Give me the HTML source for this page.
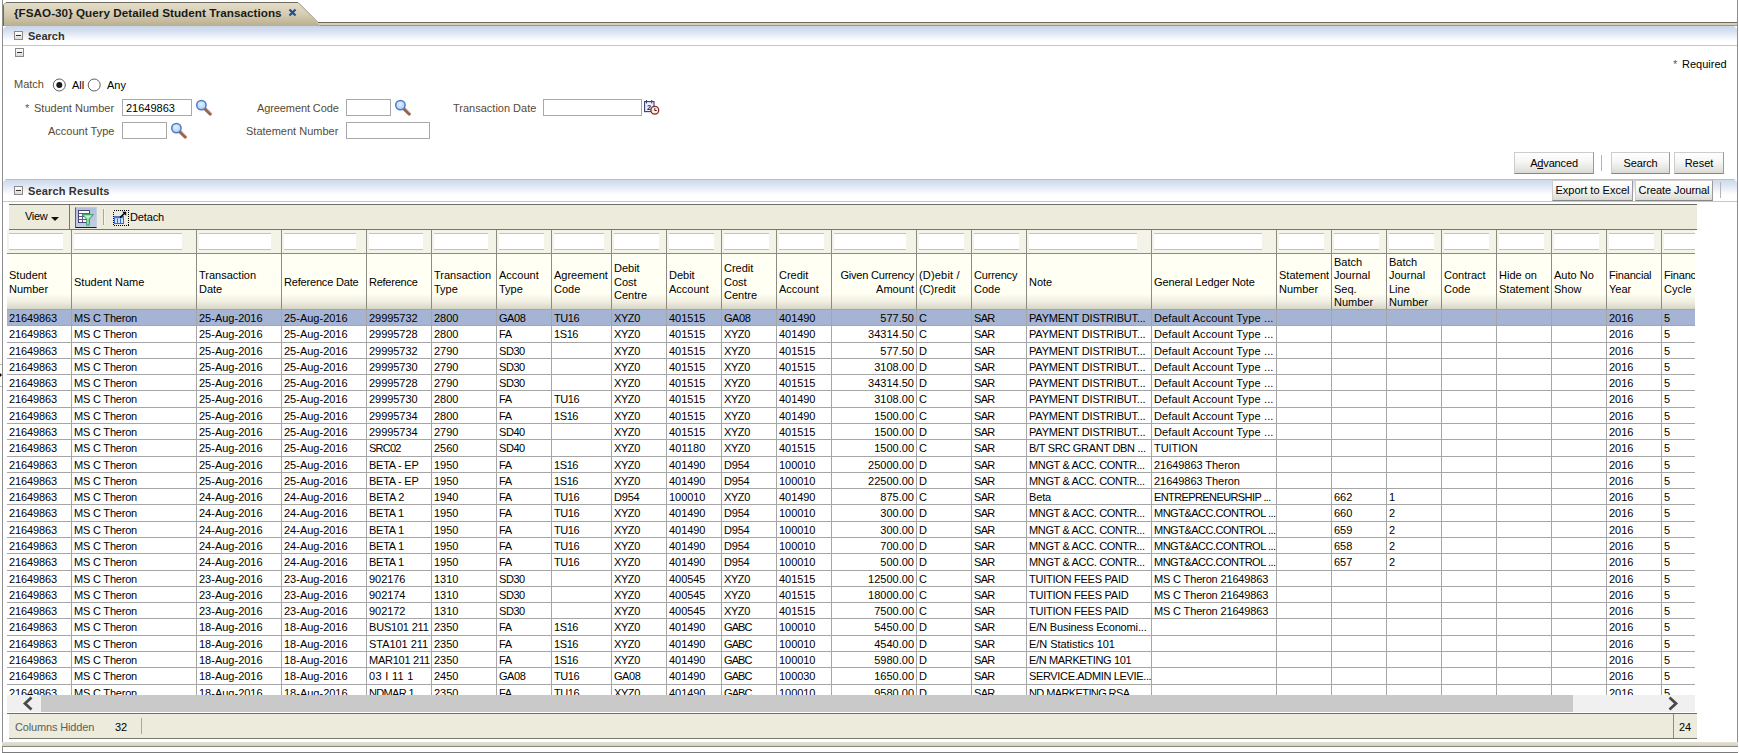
<!DOCTYPE html>
<html><head><meta charset="utf-8"><title>{FSAO-30} Query Detailed Student Transactions</title>
<style>
html,body{margin:0;padding:0;background:#fff;}
body{width:1739px;height:753px;overflow:hidden;position:relative;font-family:"Liberation Sans",sans-serif;font-size:11px;color:#000;}
.a{position:absolute;}
.t{position:absolute;white-space:nowrap;line-height:13px;margin-top:1px;}
.lbl{color:#5a4a33;}
.inp{position:absolute;background:#fff;border:1px solid #a9a9a9;box-sizing:border-box;}
.btn{position:absolute;box-sizing:border-box;border:1px solid #cdcdcd;border-bottom-color:#868686;border-right-color:#9a9a9a;background:linear-gradient(#ffffff 0%,#f6f6f4 45%,#dadad5 100%);text-align:center;line-height:20px;color:#000;white-space:nowrap;}
#grid{position:absolute;left:7px;top:229px;width:1688px;height:466px;overflow:hidden;background:#fff;}
.fc{position:absolute;top:1px;height:23px;background:#f4f3e8;border-right:1px solid #8c8c84;box-sizing:border-box;}
.fi{position:absolute;left:2px;top:3px;height:17px;background:#fff;border-top:1px solid #c4c3b8;border-bottom:1px solid #c4c3b8;box-sizing:border-box;}
.hc{position:absolute;top:25px;height:55px;border-right:1px solid #8c8c84;box-sizing:border-box;background:linear-gradient(#fffff3 0%,#fffff3 72%,#efeee0 87%,#d6d5c5 100%);display:flex;align-items:center;line-height:13.5px;padding:2px 0 0 2px;white-space:nowrap;overflow:hidden;}
.hc.r{justify-content:flex-end;text-align:right;padding:2px 2px 0 0;}
.row{position:absolute;left:0;width:1710px;border-top:1px solid #a6a6a6;box-sizing:border-box;}
.row.sel{background:#a6b4d3;}
.c{position:absolute;top:0;bottom:0;border-right:1px solid #a6a6a6;box-sizing:border-box;padding:0 0 0 2px;white-space:nowrap;overflow:hidden;line-height:16px;letter-spacing:-0.2px;}
.c.r{text-align:right;padding:0 2px 0 0;}
.l-18{letter-spacing:-0.90px}.l-15{letter-spacing:-0.75px}.l-13{letter-spacing:-0.65px}.l-12{letter-spacing:-0.60px}.l-10{letter-spacing:-0.50px}.l-9{letter-spacing:-0.45px}.l-8{letter-spacing:-0.40px}.l-7{letter-spacing:-0.35px}.l-6{letter-spacing:-0.30px}.l-5{letter-spacing:-0.25px}.l-4{letter-spacing:-0.20px}.l-3{letter-spacing:-0.15px}.l-2{letter-spacing:-0.10px}.l-1{letter-spacing:-0.05px}.l0{letter-spacing:0.00px}.l2{letter-spacing:0.10px}.l3{letter-spacing:0.15px}.l6{letter-spacing:0.30px}</style></head><body>


<!-- tab -->
<svg class="a" style="left:0;top:0" width="1739" height="26">
<defs><linearGradient id="tg" x1="0" y1="0" x2="0" y2="1"><stop offset="0" stop-color="#e4ddc8"/><stop offset="0.5" stop-color="#d4ccb1"/><stop offset="1" stop-color="#b9ae8e"/></linearGradient></defs>
<rect x="3" y="23" width="1734" height="2" fill="#d6d2ba"/>
<rect x="3" y="25" width="1734" height="1" fill="#9e9882"/>
<path d="M3.5 26 L3.5 5 L6 2.5 L298 2.5 L318 22.5 L1737 22.5" fill="none" stroke="#6f6c5e" stroke-width="1"/>
<path d="M4 26 L4 5.2 L6.2 3 L297.8 3 L320.5 26 Z" fill="url(#tg)"/>
<path d="M289.5 9.5 L295.5 15.5 M295.5 9.5 L289.5 15.5" stroke="#1f4f8f" stroke-width="2.2" fill="none"/>
</svg>
<div class="t" style="left:14px;top:5px;font-weight:bold;font-size:11.7px;color:#1a1a1a;letter-spacing:0.03px">{FSAO-30} Query Detailed Student Transactions</div>

<!-- side borders -->
<div class="a" style="left:2px;top:0px;width:1px;height:753px;background:#8e8e8e;"></div>
<div class="a" style="left:1737px;top:0px;width:1px;height:747px;background:#8e8e8e;"></div>

<div class="a" style="left:0;top:364px;width:2px;height:1px;background:#b4b4b4;"></div>
<div class="a" style="left:0;top:386px;width:2px;height:1px;background:#b4b4b4;"></div>
<div class="a" style="left:0;top:373px;width:0;height:0;border-top:2.5px solid transparent;border-bottom:2.5px solid transparent;border-left:2.5px solid #000;"></div>
<!-- Search header -->
<div class="a" style="left:3px;top:26px;width:1734px;height:19px;background:linear-gradient(#c8d5ea 0%,#d7e1f0 28%,#edf2f9 55%,#ffffff 80%);"></div>
<div class="a" style="left:3px;top:45px;width:1734px;height:1px;background:#c6c6c6;"></div>
<div class="a" style="left:14px;top:31px;width:9px;height:9px;box-sizing:border-box;border:1px solid #8a8a8a;background:linear-gradient(#fff,#dcdcd4);"></div>
<div class="a" style="left:16px;top:35px;width:5px;height:1px;background:#333;"></div>
<div class="t" style="left:28px;top:29px;font-weight:bold;color:#333;">Search</div>
<div class="a" style="left:15px;top:48px;width:9px;height:9px;box-sizing:border-box;border:1px solid #8a8a8a;background:linear-gradient(#fff,#dcdcd4);"></div>
<div class="a" style="left:17px;top:52px;width:5px;height:1px;background:#333;"></div>

<div class="t" style="left:1673px;top:57px;color:#3a5a9a">*</div><div class="t" style="left:1682px;top:57px;">Required</div>

<!-- Match -->
<div class="t lbl" style="left:14px;top:77px;">Match</div>
<svg class="a" style="left:50px;top:75px" width="60" height="20" viewBox="0 0 60 20">
<circle cx="9.3" cy="10" r="6" fill="#fff" stroke="#5f5f5f" stroke-width="1"/><circle cx="9.3" cy="10" r="3" fill="#1a1a1a"/>
<circle cx="44.2" cy="10" r="6" fill="#fff" stroke="#5f5f5f" stroke-width="1"/>
</svg>
<div class="t" style="left:72px;top:78px;">All</div>
<div class="t" style="left:107px;top:78px;">Any</div>

<!-- form row 1 -->
<div class="t" style="left:25px;top:101px;color:#3a5a9a">*</div><div class="t lbl" style="left:34px;top:101px;">Student Number</div>
<div class="inp" style="left:122px;top:99px;width:70px;height:17px;"></div>
<div class="t" style="left:126px;top:101px;">21649863</div>
<div class="t lbl" style="left:257px;top:101px;letter-spacing:-0.1px">Agreement Code</div>
<div class="inp" style="left:346px;top:99px;width:45px;height:17px;"></div>
<div class="t lbl" style="left:453px;top:101px;">Transaction Date</div>
<div class="inp" style="left:543px;top:99px;width:99px;height:17px;"></div>
<!-- form row 2 -->
<div class="t lbl" style="left:48px;top:124px;">Account Type</div>
<div class="inp" style="left:122px;top:122px;width:45px;height:17px;"></div>
<div class="t lbl" style="left:246px;top:124px;">Statement Number</div>
<div class="inp" style="left:346px;top:122px;width:84px;height:17px;"></div>

<svg class="a" style="left:195px;top:99px" width="18" height="18" viewBox="0 0 18 18">
<defs><radialGradient id="lg195" cx="0.45" cy="0.4" r="0.6"><stop offset="0" stop-color="#e4f1ff"/><stop offset="1" stop-color="#a9cdfb"/></radialGradient></defs>
<path d="M10.3 10 L15.2 14.9" stroke="#9a6248" stroke-width="3.4" stroke-linecap="round"/>
<path d="M11.6 9.6 L16.2 14.2" stroke="#d9b19b" stroke-width="0.9" stroke-linecap="round"/>
<circle cx="6.4" cy="6.1" r="4.7" fill="url(#lg195)" stroke="#4c7cc6" stroke-width="1.5"/>
</svg>
<svg class="a" style="left:394px;top:99px" width="18" height="18" viewBox="0 0 18 18">
<defs><radialGradient id="lg394" cx="0.45" cy="0.4" r="0.6"><stop offset="0" stop-color="#e4f1ff"/><stop offset="1" stop-color="#a9cdfb"/></radialGradient></defs>
<path d="M10.3 10 L15.2 14.9" stroke="#9a6248" stroke-width="3.4" stroke-linecap="round"/>
<path d="M11.6 9.6 L16.2 14.2" stroke="#d9b19b" stroke-width="0.9" stroke-linecap="round"/>
<circle cx="6.4" cy="6.1" r="4.7" fill="url(#lg394)" stroke="#4c7cc6" stroke-width="1.5"/>
</svg>
<svg class="a" style="left:170px;top:122px" width="18" height="18" viewBox="0 0 18 18">
<defs><radialGradient id="lg170" cx="0.45" cy="0.4" r="0.6"><stop offset="0" stop-color="#e4f1ff"/><stop offset="1" stop-color="#a9cdfb"/></radialGradient></defs>
<path d="M10.3 10 L15.2 14.9" stroke="#9a6248" stroke-width="3.4" stroke-linecap="round"/>
<path d="M11.6 9.6 L16.2 14.2" stroke="#d9b19b" stroke-width="0.9" stroke-linecap="round"/>
<circle cx="6.4" cy="6.1" r="4.7" fill="url(#lg170)" stroke="#4c7cc6" stroke-width="1.5"/>
</svg>
<svg class="a" style="left:644px;top:99px" width="17" height="17" viewBox="0 0 17 17">
<rect x="0.6" y="2.6" width="9.4" height="10" fill="#eef0fb" stroke="#3c3e72" stroke-width="1.1"/>
<rect x="2" y="1" width="1" height="3.4" fill="#3c3e72"/><rect x="7.2" y="1" width="1" height="3.4" fill="#3c3e72"/>
<text x="3" y="10.6" font-family="Liberation Sans, sans-serif" font-size="7.5" font-weight="bold" fill="#2c2c2c">2</text>
<circle cx="10.8" cy="11.3" r="3.9" fill="#fdeedd" stroke="#8e2424" stroke-width="1.3"/>
<path d="M10.8 9.2 L10.8 11.5 L12.7 11.5" stroke="#111" stroke-width="0.9" fill="none"/>
</svg>

<div class="btn" style="left:1514px;top:152px;width:80px;height:22px;letter-spacing:-0.15px">A<u>d</u>vanced</div>
<div class="a" style="left:1601px;top:155px;width:1px;height:16px;background:#b4b4b4;"></div>
<div class="btn" style="left:1611px;top:152px;width:59px;height:22px;letter-spacing:-0.15px">Search</div>
<div class="btn" style="left:1674px;top:152px;width:50px;height:22px;">Reset</div>

<!-- Search Results header -->
<div class="a" style="left:3px;top:179px;width:1734px;height:22px;background:linear-gradient(#cbd8eb 0%,#d9e3f1 25%,#eef2f9 50%,#ffffff 72%);"></div><div class="a" style="left:3px;top:179px;width:1734px;height:1px;background:#b6bfca;"></div>
<div class="a" style="left:3px;top:201px;width:1734px;height:1px;background:#c6c6c6;"></div>
<div class="a" style="left:14px;top:186px;width:9px;height:9px;box-sizing:border-box;border:1px solid #8a8a8a;background:linear-gradient(#fff,#dcdcd4);"></div>
<div class="a" style="left:16px;top:190px;width:5px;height:1px;background:#333;"></div>
<div class="t" style="left:28px;top:184px;font-weight:bold;color:#333;letter-spacing:0.15px;">Search Results</div>
<div class="btn" style="left:1552px;top:180px;width:81px;height:21px;line-height:19px;">Export to Excel</div>
<div class="btn" style="left:1635px;top:180px;width:78px;height:21px;line-height:19px;letter-spacing:-0.1px">Create Journal</div>
<div class="a" style="left:1720px;top:182px;width:1px;height:16px;background:#b4b4b4;"></div>

<div class="a" style="left:3px;top:26px;width:0;height:0;border-top:3px solid #fff;border-right:3px solid transparent;"></div>
<div class="a" style="left:1734px;top:26px;width:0;height:0;border-top:3px solid #fff;border-left:3px solid transparent;"></div>
<div class="a" style="left:3px;top:179px;width:0;height:0;border-top:3px solid #fff;border-right:3px solid transparent;"></div>
<div class="a" style="left:1734px;top:179px;width:0;height:0;border-top:3px solid #fff;border-left:3px solid transparent;"></div>
<!-- table toolbar -->
<div class="a" style="left:9px;top:204px;width:1688px;height:26px;box-sizing:border-box;border-top:1px solid #6e6e66;border-bottom:1px solid #6e6e66;background:#ecebdc;"></div>
<div class="t" style="left:25px;top:209px;letter-spacing:-0.3px">View</div>
<div class="a" style="left:51px;top:217px;width:0;height:0;border-left:4px solid transparent;border-right:4px solid transparent;border-top:4px solid #111;"></div>
<div class="a" style="left:69px;top:205px;width:1px;height:24px;background:#77776e;"></div>
<div class="a" style="left:75px;top:207px;width:22px;height:21px;box-sizing:border-box;background:linear-gradient(#b1c0db,#c2cee3);border-left:1px solid #5c6074;border-bottom:1px solid #1c1c2c;border-top:1px solid #c0cbe0;border-right:1px solid #c6d0e4;"></div>
<svg class="a" style="left:77px;top:209px" width="18" height="18" viewBox="0 0 18 18">
<rect x="1.5" y="1.5" width="11" height="12" fill="#fdfdff" stroke="#4a4575" stroke-width="1"/>
<path d="M2 4.5H12M2 7.5H12M2 10.5H12M5.5 4.5V13" stroke="#5d5892" stroke-width="1" fill="none"/>
<path d="M5.4 5.6 H16.4 L12.3 10.3 V16.2 H9.6 V10.3 Z" fill="#93e2ab" stroke="#3f9f62" stroke-width="1" stroke-linejoin="round"/>
<path d="M7.6 6.7 H14.1 L11 9.8 Z" fill="#bdf1cb"/>
</svg>
<div class="a" style="left:103px;top:209px;width:1px;height:16px;background:#a9a899;"></div>
<div class="a" style="left:104px;top:209px;width:1px;height:16px;background:#f6f5ea;"></div>
<svg class="a" style="left:113px;top:210px" width="16" height="16" viewBox="0 0 16 16">
<rect x="0.5" y="0.5" width="15" height="15" fill="none" stroke="#000" stroke-width="1" stroke-dasharray="1 1" shape-rendering="crispEdges"/>
<rect x="1.5" y="6.5" width="9" height="7" fill="#cfe4ff" stroke="#3a68cc" stroke-width="1"/>
<rect x="1" y="6" width="10" height="2.2" fill="#4a78d2"/>
<path d="M4.5 8.5V13.5M7.5 8.5V13.5" stroke="#3a68cc" stroke-width="1"/>
<path d="M7 7.6 L12.2 2.8" stroke="#000" stroke-width="1.5"/><path d="M9.2 1.8 H13.2 V5.8 Z" fill="#000"/>
</svg>
<div class="t" style="left:130px;top:210px;letter-spacing:-0.15px">Detach</div>

<div id="grid">
<div class="a" style="left:2px;top:0;width:1710px;height:1px;background:#77776e;"></div>
<div class="fc" style="left:0px;width:65px;"><div class="fi" style="width:54px"></div></div>
<div class="hc" style="left:0px;width:65px;"><span>Student<br>Number</span></div>
<div class="fc" style="left:65px;width:125px;"><div class="fi" style="width:108px"></div></div>
<div class="hc" style="left:65px;width:125px;"><span>Student Name</span></div>
<div class="fc" style="left:190px;width:85px;"><div class="fi" style="width:72px"></div></div>
<div class="hc" style="left:190px;width:85px;"><span>Transaction<br>Date</span></div>
<div class="fc" style="left:275px;width:85px;"><div class="fi" style="width:72px"></div></div>
<div class="hc" style="left:275px;width:85px;"><span><span style="letter-spacing:-0.18px">Reference Date</span></span></div>
<div class="fc" style="left:360px;width:65px;"><div class="fi" style="width:54px"></div></div>
<div class="hc" style="left:360px;width:65px;"><span><span style="letter-spacing:-0.25px">Reference</span></span></div>
<div class="fc" style="left:425px;width:65px;"><div class="fi" style="width:54px"></div></div>
<div class="hc" style="left:425px;width:65px;"><span>Transaction<br>Type</span></div>
<div class="fc" style="left:490px;width:55px;"><div class="fi" style="width:45px"></div></div>
<div class="hc" style="left:490px;width:55px;"><span>Account<br>Type</span></div>
<div class="fc" style="left:545px;width:60px;"><div class="fi" style="width:50px"></div></div>
<div class="hc" style="left:545px;width:60px;"><span>Agreement<br>Code</span></div>
<div class="fc" style="left:605px;width:55px;"><div class="fi" style="width:45px"></div></div>
<div class="hc" style="left:605px;width:55px;"><span>Debit<br>Cost<br>Centre</span></div>
<div class="fc" style="left:660px;width:55px;"><div class="fi" style="width:45px"></div></div>
<div class="hc" style="left:660px;width:55px;"><span>Debit<br>Account</span></div>
<div class="fc" style="left:715px;width:55px;"><div class="fi" style="width:45px"></div></div>
<div class="hc" style="left:715px;width:55px;"><span>Credit<br>Cost<br>Centre</span></div>
<div class="fc" style="left:770px;width:55px;"><div class="fi" style="width:45px"></div></div>
<div class="hc" style="left:770px;width:55px;"><span>Credit<br>Account</span></div>
<div class="fc" style="left:825px;width:85px;"><div class="fi" style="width:72px"></div></div>
<div class="hc r" style="left:825px;width:85px;"><span><span style="letter-spacing:-0.20px">Given Currency</span><br>Amount</span></div>
<div class="fc" style="left:910px;width:55px;"><div class="fi" style="width:45px"></div></div>
<div class="hc" style="left:910px;width:55px;"><span><span style="letter-spacing:0.18px">(D)ebit /</span><br>(C)redit</span></div>
<div class="fc" style="left:965px;width:55px;"><div class="fi" style="width:45px"></div></div>
<div class="hc" style="left:965px;width:55px;"><span><span style="letter-spacing:-0.17px">Currency</span><br>Code</span></div>
<div class="fc" style="left:1020px;width:125px;"><div class="fi" style="width:108px"></div></div>
<div class="hc" style="left:1020px;width:125px;"><span>Note</span></div>
<div class="fc" style="left:1145px;width:125px;"><div class="fi" style="width:108px"></div></div>
<div class="hc" style="left:1145px;width:125px;"><span><span style="letter-spacing:-0.10px">General Ledger Note</span></span></div>
<div class="fc" style="left:1270px;width:55px;"><div class="fi" style="width:45px"></div></div>
<div class="hc" style="left:1270px;width:55px;"><span>Statement<br>Number</span></div>
<div class="fc" style="left:1325px;width:55px;"><div class="fi" style="width:45px"></div></div>
<div class="hc" style="left:1325px;width:55px;"><span>Batch<br>Journal<br>Seq.<br>Number</span></div>
<div class="fc" style="left:1380px;width:55px;"><div class="fi" style="width:45px"></div></div>
<div class="hc" style="left:1380px;width:55px;"><span>Batch<br>Journal<br>Line<br>Number</span></div>
<div class="fc" style="left:1435px;width:55px;"><div class="fi" style="width:45px"></div></div>
<div class="hc" style="left:1435px;width:55px;"><span>Contract<br>Code</span></div>
<div class="fc" style="left:1490px;width:55px;"><div class="fi" style="width:45px"></div></div>
<div class="hc" style="left:1490px;width:55px;"><span>Hide on<br>Statement</span></div>
<div class="fc" style="left:1545px;width:55px;"><div class="fi" style="width:45px"></div></div>
<div class="hc" style="left:1545px;width:55px;"><span>Auto No<br>Show</span></div>
<div class="fc" style="left:1600px;width:55px;"><div class="fi" style="width:45px"></div></div>
<div class="hc" style="left:1600px;width:55px;"><span><span style="letter-spacing:-0.19px">Financial</span><br>Year</span></div>
<div class="fc" style="left:1655px;width:55px;"><div class="fi" style="width:45px"></div></div>
<div class="hc" style="left:1655px;width:55px;"><span><span style="letter-spacing:-0.19px">Financial</span><br>Cycle</span></div>
<div class="a" style="left:0;top:24px;width:1710px;height:1px;background:#8c8c84;"></div>
<div class="row sel" style="top:80px;height:16px;">
<div class="c l-2" style="left:0px;width:65px;">21649863</div>
<div class="c l-4" style="left:65px;width:125px;">MS C Theron</div>
<div class="c l0" style="left:190px;width:85px;">25-Aug-2016</div>
<div class="c l0" style="left:275px;width:85px;">25-Aug-2016</div>
<div class="c l-1" style="left:360px;width:65px;">29995732</div>
<div class="c l-1" style="left:425px;width:65px;">2800</div>
<div class="c l-9" style="left:490px;width:55px;">GA08</div>
<div class="c l-8" style="left:545px;width:60px;">TU16</div>
<div class="c l-8" style="left:605px;width:55px;">XYZ0</div>
<div class="c l-1" style="left:660px;width:55px;">401515</div>
<div class="c l-9" style="left:715px;width:55px;">GA08</div>
<div class="c l-1" style="left:770px;width:55px;">401490</div>
<div class="c r l0" style="left:825px;width:85px;">577.50</div>
<div class="c l-4" style="left:910px;width:55px;">C</div>
<div class="c l-13" style="left:965px;width:55px;">SAR</div>
<div class="c l-4" style="left:1020px;width:125px;">PAYMENT DISTRIBUT...</div>
<div class="c l3" style="left:1145px;width:125px;">Default Account Type ...</div>
<div class="c" style="left:1270px;width:55px;"></div>
<div class="c" style="left:1325px;width:55px;"></div>
<div class="c" style="left:1380px;width:55px;"></div>
<div class="c" style="left:1435px;width:55px;"></div>
<div class="c" style="left:1490px;width:55px;"></div>
<div class="c" style="left:1545px;width:55px;"></div>
<div class="c l-1" style="left:1600px;width:55px;">2016</div>
<div class="c l-4" style="left:1655px;width:55px;">5</div>
</div>
<div class="row" style="top:96px;height:17px;">
<div class="c l-2" style="left:0px;width:65px;">21649863</div>
<div class="c l-4" style="left:65px;width:125px;">MS C Theron</div>
<div class="c l0" style="left:190px;width:85px;">25-Aug-2016</div>
<div class="c l0" style="left:275px;width:85px;">25-Aug-2016</div>
<div class="c l-1" style="left:360px;width:65px;">29995728</div>
<div class="c l-1" style="left:425px;width:65px;">2800</div>
<div class="c l-6" style="left:490px;width:55px;">FA</div>
<div class="c l-8" style="left:545px;width:60px;">1S16</div>
<div class="c l-8" style="left:605px;width:55px;">XYZ0</div>
<div class="c l-1" style="left:660px;width:55px;">401515</div>
<div class="c l-8" style="left:715px;width:55px;">XYZ0</div>
<div class="c l-1" style="left:770px;width:55px;">401490</div>
<div class="c r l0" style="left:825px;width:85px;">34314.50</div>
<div class="c l-4" style="left:910px;width:55px;">C</div>
<div class="c l-13" style="left:965px;width:55px;">SAR</div>
<div class="c l-4" style="left:1020px;width:125px;">PAYMENT DISTRIBUT...</div>
<div class="c l3" style="left:1145px;width:125px;">Default Account Type ...</div>
<div class="c" style="left:1270px;width:55px;"></div>
<div class="c" style="left:1325px;width:55px;"></div>
<div class="c" style="left:1380px;width:55px;"></div>
<div class="c" style="left:1435px;width:55px;"></div>
<div class="c" style="left:1490px;width:55px;"></div>
<div class="c" style="left:1545px;width:55px;"></div>
<div class="c l-1" style="left:1600px;width:55px;">2016</div>
<div class="c l-4" style="left:1655px;width:55px;">5</div>
</div>
<div class="row" style="top:113px;height:16px;">
<div class="c l-2" style="left:0px;width:65px;">21649863</div>
<div class="c l-4" style="left:65px;width:125px;">MS C Theron</div>
<div class="c l0" style="left:190px;width:85px;">25-Aug-2016</div>
<div class="c l0" style="left:275px;width:85px;">25-Aug-2016</div>
<div class="c l-1" style="left:360px;width:65px;">29995732</div>
<div class="c l-1" style="left:425px;width:65px;">2790</div>
<div class="c l-9" style="left:490px;width:55px;">SD30</div>
<div class="c" style="left:545px;width:60px;"></div>
<div class="c l-8" style="left:605px;width:55px;">XYZ0</div>
<div class="c l-1" style="left:660px;width:55px;">401515</div>
<div class="c l-8" style="left:715px;width:55px;">XYZ0</div>
<div class="c l-1" style="left:770px;width:55px;">401515</div>
<div class="c r l0" style="left:825px;width:85px;">577.50</div>
<div class="c l-4" style="left:910px;width:55px;">D</div>
<div class="c l-13" style="left:965px;width:55px;">SAR</div>
<div class="c l-4" style="left:1020px;width:125px;">PAYMENT DISTRIBUT...</div>
<div class="c l3" style="left:1145px;width:125px;">Default Account Type ...</div>
<div class="c" style="left:1270px;width:55px;"></div>
<div class="c" style="left:1325px;width:55px;"></div>
<div class="c" style="left:1380px;width:55px;"></div>
<div class="c" style="left:1435px;width:55px;"></div>
<div class="c" style="left:1490px;width:55px;"></div>
<div class="c" style="left:1545px;width:55px;"></div>
<div class="c l-1" style="left:1600px;width:55px;">2016</div>
<div class="c l-4" style="left:1655px;width:55px;">5</div>
</div>
<div class="row" style="top:129px;height:16px;">
<div class="c l-2" style="left:0px;width:65px;">21649863</div>
<div class="c l-4" style="left:65px;width:125px;">MS C Theron</div>
<div class="c l0" style="left:190px;width:85px;">25-Aug-2016</div>
<div class="c l0" style="left:275px;width:85px;">25-Aug-2016</div>
<div class="c l-1" style="left:360px;width:65px;">29995730</div>
<div class="c l-1" style="left:425px;width:65px;">2790</div>
<div class="c l-9" style="left:490px;width:55px;">SD30</div>
<div class="c" style="left:545px;width:60px;"></div>
<div class="c l-8" style="left:605px;width:55px;">XYZ0</div>
<div class="c l-1" style="left:660px;width:55px;">401515</div>
<div class="c l-8" style="left:715px;width:55px;">XYZ0</div>
<div class="c l-1" style="left:770px;width:55px;">401515</div>
<div class="c r l0" style="left:825px;width:85px;">3108.00</div>
<div class="c l-4" style="left:910px;width:55px;">D</div>
<div class="c l-13" style="left:965px;width:55px;">SAR</div>
<div class="c l-4" style="left:1020px;width:125px;">PAYMENT DISTRIBUT...</div>
<div class="c l3" style="left:1145px;width:125px;">Default Account Type ...</div>
<div class="c" style="left:1270px;width:55px;"></div>
<div class="c" style="left:1325px;width:55px;"></div>
<div class="c" style="left:1380px;width:55px;"></div>
<div class="c" style="left:1435px;width:55px;"></div>
<div class="c" style="left:1490px;width:55px;"></div>
<div class="c" style="left:1545px;width:55px;"></div>
<div class="c l-1" style="left:1600px;width:55px;">2016</div>
<div class="c l-4" style="left:1655px;width:55px;">5</div>
</div>
<div class="row" style="top:145px;height:16px;">
<div class="c l-2" style="left:0px;width:65px;">21649863</div>
<div class="c l-4" style="left:65px;width:125px;">MS C Theron</div>
<div class="c l0" style="left:190px;width:85px;">25-Aug-2016</div>
<div class="c l0" style="left:275px;width:85px;">25-Aug-2016</div>
<div class="c l-1" style="left:360px;width:65px;">29995728</div>
<div class="c l-1" style="left:425px;width:65px;">2790</div>
<div class="c l-9" style="left:490px;width:55px;">SD30</div>
<div class="c" style="left:545px;width:60px;"></div>
<div class="c l-8" style="left:605px;width:55px;">XYZ0</div>
<div class="c l-1" style="left:660px;width:55px;">401515</div>
<div class="c l-8" style="left:715px;width:55px;">XYZ0</div>
<div class="c l-1" style="left:770px;width:55px;">401515</div>
<div class="c r l0" style="left:825px;width:85px;">34314.50</div>
<div class="c l-4" style="left:910px;width:55px;">D</div>
<div class="c l-13" style="left:965px;width:55px;">SAR</div>
<div class="c l-4" style="left:1020px;width:125px;">PAYMENT DISTRIBUT...</div>
<div class="c l3" style="left:1145px;width:125px;">Default Account Type ...</div>
<div class="c" style="left:1270px;width:55px;"></div>
<div class="c" style="left:1325px;width:55px;"></div>
<div class="c" style="left:1380px;width:55px;"></div>
<div class="c" style="left:1435px;width:55px;"></div>
<div class="c" style="left:1490px;width:55px;"></div>
<div class="c" style="left:1545px;width:55px;"></div>
<div class="c l-1" style="left:1600px;width:55px;">2016</div>
<div class="c l-4" style="left:1655px;width:55px;">5</div>
</div>
<div class="row" style="top:161px;height:17px;">
<div class="c l-2" style="left:0px;width:65px;">21649863</div>
<div class="c l-4" style="left:65px;width:125px;">MS C Theron</div>
<div class="c l0" style="left:190px;width:85px;">25-Aug-2016</div>
<div class="c l0" style="left:275px;width:85px;">25-Aug-2016</div>
<div class="c l-1" style="left:360px;width:65px;">29995730</div>
<div class="c l-1" style="left:425px;width:65px;">2800</div>
<div class="c l-6" style="left:490px;width:55px;">FA</div>
<div class="c l-8" style="left:545px;width:60px;">TU16</div>
<div class="c l-8" style="left:605px;width:55px;">XYZ0</div>
<div class="c l-1" style="left:660px;width:55px;">401515</div>
<div class="c l-8" style="left:715px;width:55px;">XYZ0</div>
<div class="c l-1" style="left:770px;width:55px;">401490</div>
<div class="c r l0" style="left:825px;width:85px;">3108.00</div>
<div class="c l-4" style="left:910px;width:55px;">C</div>
<div class="c l-13" style="left:965px;width:55px;">SAR</div>
<div class="c l-4" style="left:1020px;width:125px;">PAYMENT DISTRIBUT...</div>
<div class="c l3" style="left:1145px;width:125px;">Default Account Type ...</div>
<div class="c" style="left:1270px;width:55px;"></div>
<div class="c" style="left:1325px;width:55px;"></div>
<div class="c" style="left:1380px;width:55px;"></div>
<div class="c" style="left:1435px;width:55px;"></div>
<div class="c" style="left:1490px;width:55px;"></div>
<div class="c" style="left:1545px;width:55px;"></div>
<div class="c l-1" style="left:1600px;width:55px;">2016</div>
<div class="c l-4" style="left:1655px;width:55px;">5</div>
</div>
<div class="row" style="top:178px;height:16px;">
<div class="c l-2" style="left:0px;width:65px;">21649863</div>
<div class="c l-4" style="left:65px;width:125px;">MS C Theron</div>
<div class="c l0" style="left:190px;width:85px;">25-Aug-2016</div>
<div class="c l0" style="left:275px;width:85px;">25-Aug-2016</div>
<div class="c l-1" style="left:360px;width:65px;">29995734</div>
<div class="c l-1" style="left:425px;width:65px;">2800</div>
<div class="c l-6" style="left:490px;width:55px;">FA</div>
<div class="c l-8" style="left:545px;width:60px;">1S16</div>
<div class="c l-8" style="left:605px;width:55px;">XYZ0</div>
<div class="c l-1" style="left:660px;width:55px;">401515</div>
<div class="c l-8" style="left:715px;width:55px;">XYZ0</div>
<div class="c l-1" style="left:770px;width:55px;">401490</div>
<div class="c r l0" style="left:825px;width:85px;">1500.00</div>
<div class="c l-4" style="left:910px;width:55px;">C</div>
<div class="c l-13" style="left:965px;width:55px;">SAR</div>
<div class="c l-4" style="left:1020px;width:125px;">PAYMENT DISTRIBUT...</div>
<div class="c l3" style="left:1145px;width:125px;">Default Account Type ...</div>
<div class="c" style="left:1270px;width:55px;"></div>
<div class="c" style="left:1325px;width:55px;"></div>
<div class="c" style="left:1380px;width:55px;"></div>
<div class="c" style="left:1435px;width:55px;"></div>
<div class="c" style="left:1490px;width:55px;"></div>
<div class="c" style="left:1545px;width:55px;"></div>
<div class="c l-1" style="left:1600px;width:55px;">2016</div>
<div class="c l-4" style="left:1655px;width:55px;">5</div>
</div>
<div class="row" style="top:194px;height:16px;">
<div class="c l-2" style="left:0px;width:65px;">21649863</div>
<div class="c l-4" style="left:65px;width:125px;">MS C Theron</div>
<div class="c l0" style="left:190px;width:85px;">25-Aug-2016</div>
<div class="c l0" style="left:275px;width:85px;">25-Aug-2016</div>
<div class="c l-1" style="left:360px;width:65px;">29995734</div>
<div class="c l-1" style="left:425px;width:65px;">2790</div>
<div class="c l-9" style="left:490px;width:55px;">SD40</div>
<div class="c" style="left:545px;width:60px;"></div>
<div class="c l-8" style="left:605px;width:55px;">XYZ0</div>
<div class="c l-1" style="left:660px;width:55px;">401515</div>
<div class="c l-8" style="left:715px;width:55px;">XYZ0</div>
<div class="c l-1" style="left:770px;width:55px;">401515</div>
<div class="c r l0" style="left:825px;width:85px;">1500.00</div>
<div class="c l-4" style="left:910px;width:55px;">D</div>
<div class="c l-13" style="left:965px;width:55px;">SAR</div>
<div class="c l-4" style="left:1020px;width:125px;">PAYMENT DISTRIBUT...</div>
<div class="c l3" style="left:1145px;width:125px;">Default Account Type ...</div>
<div class="c" style="left:1270px;width:55px;"></div>
<div class="c" style="left:1325px;width:55px;"></div>
<div class="c" style="left:1380px;width:55px;"></div>
<div class="c" style="left:1435px;width:55px;"></div>
<div class="c" style="left:1490px;width:55px;"></div>
<div class="c" style="left:1545px;width:55px;"></div>
<div class="c l-1" style="left:1600px;width:55px;">2016</div>
<div class="c l-4" style="left:1655px;width:55px;">5</div>
</div>
<div class="row" style="top:210px;height:17px;">
<div class="c l-2" style="left:0px;width:65px;">21649863</div>
<div class="c l-4" style="left:65px;width:125px;">MS C Theron</div>
<div class="c l0" style="left:190px;width:85px;">25-Aug-2016</div>
<div class="c l0" style="left:275px;width:85px;">25-Aug-2016</div>
<div class="c l-15" style="left:360px;width:65px;">SRC02</div>
<div class="c l-1" style="left:425px;width:65px;">2560</div>
<div class="c l-9" style="left:490px;width:55px;">SD40</div>
<div class="c" style="left:545px;width:60px;"></div>
<div class="c l-8" style="left:605px;width:55px;">XYZ0</div>
<div class="c l2" style="left:660px;width:55px;">401180</div>
<div class="c l-8" style="left:715px;width:55px;">XYZ0</div>
<div class="c l-1" style="left:770px;width:55px;">401515</div>
<div class="c r l0" style="left:825px;width:85px;">1500.00</div>
<div class="c l-4" style="left:910px;width:55px;">C</div>
<div class="c l-13" style="left:965px;width:55px;">SAR</div>
<div class="c l-6" style="left:1020px;width:125px;">B/T SRC GRANT DBN ...</div>
<div class="c l-1" style="left:1145px;width:125px;">TUITION</div>
<div class="c" style="left:1270px;width:55px;"></div>
<div class="c" style="left:1325px;width:55px;"></div>
<div class="c" style="left:1380px;width:55px;"></div>
<div class="c" style="left:1435px;width:55px;"></div>
<div class="c" style="left:1490px;width:55px;"></div>
<div class="c" style="left:1545px;width:55px;"></div>
<div class="c l-1" style="left:1600px;width:55px;">2016</div>
<div class="c l-4" style="left:1655px;width:55px;">5</div>
</div>
<div class="row" style="top:227px;height:16px;">
<div class="c l-2" style="left:0px;width:65px;">21649863</div>
<div class="c l-4" style="left:65px;width:125px;">MS C Theron</div>
<div class="c l0" style="left:190px;width:85px;">25-Aug-2016</div>
<div class="c l0" style="left:275px;width:85px;">25-Aug-2016</div>
<div class="c l-5" style="left:360px;width:65px;">BETA - EP</div>
<div class="c l-1" style="left:425px;width:65px;">1950</div>
<div class="c l-6" style="left:490px;width:55px;">FA</div>
<div class="c l-8" style="left:545px;width:60px;">1S16</div>
<div class="c l-8" style="left:605px;width:55px;">XYZ0</div>
<div class="c l-1" style="left:660px;width:55px;">401490</div>
<div class="c l-4" style="left:715px;width:55px;">D954</div>
<div class="c l-1" style="left:770px;width:55px;">100010</div>
<div class="c r l0" style="left:825px;width:85px;">25000.00</div>
<div class="c l-4" style="left:910px;width:55px;">D</div>
<div class="c l-13" style="left:965px;width:55px;">SAR</div>
<div class="c l-7" style="left:1020px;width:125px;">MNGT &amp; ACC. CONTR...</div>
<div class="c l-1" style="left:1145px;width:125px;">21649863 Theron</div>
<div class="c" style="left:1270px;width:55px;"></div>
<div class="c" style="left:1325px;width:55px;"></div>
<div class="c" style="left:1380px;width:55px;"></div>
<div class="c" style="left:1435px;width:55px;"></div>
<div class="c" style="left:1490px;width:55px;"></div>
<div class="c" style="left:1545px;width:55px;"></div>
<div class="c l-1" style="left:1600px;width:55px;">2016</div>
<div class="c l-4" style="left:1655px;width:55px;">5</div>
</div>
<div class="row" style="top:243px;height:16px;">
<div class="c l-2" style="left:0px;width:65px;">21649863</div>
<div class="c l-4" style="left:65px;width:125px;">MS C Theron</div>
<div class="c l0" style="left:190px;width:85px;">25-Aug-2016</div>
<div class="c l0" style="left:275px;width:85px;">25-Aug-2016</div>
<div class="c l-5" style="left:360px;width:65px;">BETA - EP</div>
<div class="c l-1" style="left:425px;width:65px;">1950</div>
<div class="c l-6" style="left:490px;width:55px;">FA</div>
<div class="c l-8" style="left:545px;width:60px;">1S16</div>
<div class="c l-8" style="left:605px;width:55px;">XYZ0</div>
<div class="c l-1" style="left:660px;width:55px;">401490</div>
<div class="c l-4" style="left:715px;width:55px;">D954</div>
<div class="c l-1" style="left:770px;width:55px;">100010</div>
<div class="c r l0" style="left:825px;width:85px;">22500.00</div>
<div class="c l-4" style="left:910px;width:55px;">D</div>
<div class="c l-13" style="left:965px;width:55px;">SAR</div>
<div class="c l-7" style="left:1020px;width:125px;">MNGT &amp; ACC. CONTR...</div>
<div class="c l-1" style="left:1145px;width:125px;">21649863 Theron</div>
<div class="c" style="left:1270px;width:55px;"></div>
<div class="c" style="left:1325px;width:55px;"></div>
<div class="c" style="left:1380px;width:55px;"></div>
<div class="c" style="left:1435px;width:55px;"></div>
<div class="c" style="left:1490px;width:55px;"></div>
<div class="c" style="left:1545px;width:55px;"></div>
<div class="c l-1" style="left:1600px;width:55px;">2016</div>
<div class="c l-4" style="left:1655px;width:55px;">5</div>
</div>
<div class="row" style="top:259px;height:16px;">
<div class="c l-2" style="left:0px;width:65px;">21649863</div>
<div class="c l-4" style="left:65px;width:125px;">MS C Theron</div>
<div class="c l0" style="left:190px;width:85px;">24-Aug-2016</div>
<div class="c l0" style="left:275px;width:85px;">24-Aug-2016</div>
<div class="c l-4" style="left:360px;width:65px;">BETA 2</div>
<div class="c l-1" style="left:425px;width:65px;">1940</div>
<div class="c l-6" style="left:490px;width:55px;">FA</div>
<div class="c l-8" style="left:545px;width:60px;">TU16</div>
<div class="c l-4" style="left:605px;width:55px;">D954</div>
<div class="c l-1" style="left:660px;width:55px;">100010</div>
<div class="c l-8" style="left:715px;width:55px;">XYZ0</div>
<div class="c l-1" style="left:770px;width:55px;">401490</div>
<div class="c r l0" style="left:825px;width:85px;">875.00</div>
<div class="c l-4" style="left:910px;width:55px;">C</div>
<div class="c l-13" style="left:965px;width:55px;">SAR</div>
<div class="c l-3" style="left:1020px;width:125px;">Beta</div>
<div class="c l-12" style="left:1145px;width:125px;">ENTREPRENEURSHIP ...</div>
<div class="c" style="left:1270px;width:55px;"></div>
<div class="c l-1" style="left:1325px;width:55px;">662</div>
<div class="c l-4" style="left:1380px;width:55px;">1</div>
<div class="c" style="left:1435px;width:55px;"></div>
<div class="c" style="left:1490px;width:55px;"></div>
<div class="c" style="left:1545px;width:55px;"></div>
<div class="c l-1" style="left:1600px;width:55px;">2016</div>
<div class="c l-4" style="left:1655px;width:55px;">5</div>
</div>
<div class="row" style="top:275px;height:17px;">
<div class="c l-2" style="left:0px;width:65px;">21649863</div>
<div class="c l-4" style="left:65px;width:125px;">MS C Theron</div>
<div class="c l0" style="left:190px;width:85px;">24-Aug-2016</div>
<div class="c l0" style="left:275px;width:85px;">24-Aug-2016</div>
<div class="c l-5" style="left:360px;width:65px;">BETA 1</div>
<div class="c l-1" style="left:425px;width:65px;">1950</div>
<div class="c l-6" style="left:490px;width:55px;">FA</div>
<div class="c l-8" style="left:545px;width:60px;">TU16</div>
<div class="c l-8" style="left:605px;width:55px;">XYZ0</div>
<div class="c l-1" style="left:660px;width:55px;">401490</div>
<div class="c l-4" style="left:715px;width:55px;">D954</div>
<div class="c l-1" style="left:770px;width:55px;">100010</div>
<div class="c r l0" style="left:825px;width:85px;">300.00</div>
<div class="c l-4" style="left:910px;width:55px;">D</div>
<div class="c l-13" style="left:965px;width:55px;">SAR</div>
<div class="c l-7" style="left:1020px;width:125px;">MNGT &amp; ACC. CONTR...</div>
<div class="c l-10" style="left:1145px;width:125px;">MNGT&amp;ACC.CONTROL ...</div>
<div class="c" style="left:1270px;width:55px;"></div>
<div class="c l-1" style="left:1325px;width:55px;">660</div>
<div class="c l-4" style="left:1380px;width:55px;">2</div>
<div class="c" style="left:1435px;width:55px;"></div>
<div class="c" style="left:1490px;width:55px;"></div>
<div class="c" style="left:1545px;width:55px;"></div>
<div class="c l-1" style="left:1600px;width:55px;">2016</div>
<div class="c l-4" style="left:1655px;width:55px;">5</div>
</div>
<div class="row" style="top:292px;height:16px;">
<div class="c l-2" style="left:0px;width:65px;">21649863</div>
<div class="c l-4" style="left:65px;width:125px;">MS C Theron</div>
<div class="c l0" style="left:190px;width:85px;">24-Aug-2016</div>
<div class="c l0" style="left:275px;width:85px;">24-Aug-2016</div>
<div class="c l-5" style="left:360px;width:65px;">BETA 1</div>
<div class="c l-1" style="left:425px;width:65px;">1950</div>
<div class="c l-6" style="left:490px;width:55px;">FA</div>
<div class="c l-8" style="left:545px;width:60px;">TU16</div>
<div class="c l-8" style="left:605px;width:55px;">XYZ0</div>
<div class="c l-1" style="left:660px;width:55px;">401490</div>
<div class="c l-4" style="left:715px;width:55px;">D954</div>
<div class="c l-1" style="left:770px;width:55px;">100010</div>
<div class="c r l0" style="left:825px;width:85px;">300.00</div>
<div class="c l-4" style="left:910px;width:55px;">D</div>
<div class="c l-13" style="left:965px;width:55px;">SAR</div>
<div class="c l-7" style="left:1020px;width:125px;">MNGT &amp; ACC. CONTR...</div>
<div class="c l-10" style="left:1145px;width:125px;">MNGT&amp;ACC.CONTROL ...</div>
<div class="c" style="left:1270px;width:55px;"></div>
<div class="c l-1" style="left:1325px;width:55px;">659</div>
<div class="c l-4" style="left:1380px;width:55px;">2</div>
<div class="c" style="left:1435px;width:55px;"></div>
<div class="c" style="left:1490px;width:55px;"></div>
<div class="c" style="left:1545px;width:55px;"></div>
<div class="c l-1" style="left:1600px;width:55px;">2016</div>
<div class="c l-4" style="left:1655px;width:55px;">5</div>
</div>
<div class="row" style="top:308px;height:16px;">
<div class="c l-2" style="left:0px;width:65px;">21649863</div>
<div class="c l-4" style="left:65px;width:125px;">MS C Theron</div>
<div class="c l0" style="left:190px;width:85px;">24-Aug-2016</div>
<div class="c l0" style="left:275px;width:85px;">24-Aug-2016</div>
<div class="c l-5" style="left:360px;width:65px;">BETA 1</div>
<div class="c l-1" style="left:425px;width:65px;">1950</div>
<div class="c l-6" style="left:490px;width:55px;">FA</div>
<div class="c l-8" style="left:545px;width:60px;">TU16</div>
<div class="c l-8" style="left:605px;width:55px;">XYZ0</div>
<div class="c l-1" style="left:660px;width:55px;">401490</div>
<div class="c l-4" style="left:715px;width:55px;">D954</div>
<div class="c l-1" style="left:770px;width:55px;">100010</div>
<div class="c r l0" style="left:825px;width:85px;">700.00</div>
<div class="c l-4" style="left:910px;width:55px;">D</div>
<div class="c l-13" style="left:965px;width:55px;">SAR</div>
<div class="c l-7" style="left:1020px;width:125px;">MNGT &amp; ACC. CONTR...</div>
<div class="c l-10" style="left:1145px;width:125px;">MNGT&amp;ACC.CONTROL ...</div>
<div class="c" style="left:1270px;width:55px;"></div>
<div class="c l-1" style="left:1325px;width:55px;">658</div>
<div class="c l-4" style="left:1380px;width:55px;">2</div>
<div class="c" style="left:1435px;width:55px;"></div>
<div class="c" style="left:1490px;width:55px;"></div>
<div class="c" style="left:1545px;width:55px;"></div>
<div class="c l-1" style="left:1600px;width:55px;">2016</div>
<div class="c l-4" style="left:1655px;width:55px;">5</div>
</div>
<div class="row" style="top:324px;height:17px;">
<div class="c l-2" style="left:0px;width:65px;">21649863</div>
<div class="c l-4" style="left:65px;width:125px;">MS C Theron</div>
<div class="c l0" style="left:190px;width:85px;">24-Aug-2016</div>
<div class="c l0" style="left:275px;width:85px;">24-Aug-2016</div>
<div class="c l-5" style="left:360px;width:65px;">BETA 1</div>
<div class="c l-1" style="left:425px;width:65px;">1950</div>
<div class="c l-6" style="left:490px;width:55px;">FA</div>
<div class="c l-8" style="left:545px;width:60px;">TU16</div>
<div class="c l-8" style="left:605px;width:55px;">XYZ0</div>
<div class="c l-1" style="left:660px;width:55px;">401490</div>
<div class="c l-4" style="left:715px;width:55px;">D954</div>
<div class="c l-1" style="left:770px;width:55px;">100010</div>
<div class="c r l0" style="left:825px;width:85px;">500.00</div>
<div class="c l-4" style="left:910px;width:55px;">D</div>
<div class="c l-13" style="left:965px;width:55px;">SAR</div>
<div class="c l-7" style="left:1020px;width:125px;">MNGT &amp; ACC. CONTR...</div>
<div class="c l-10" style="left:1145px;width:125px;">MNGT&amp;ACC.CONTROL ...</div>
<div class="c" style="left:1270px;width:55px;"></div>
<div class="c l-1" style="left:1325px;width:55px;">657</div>
<div class="c l-4" style="left:1380px;width:55px;">2</div>
<div class="c" style="left:1435px;width:55px;"></div>
<div class="c" style="left:1490px;width:55px;"></div>
<div class="c" style="left:1545px;width:55px;"></div>
<div class="c l-1" style="left:1600px;width:55px;">2016</div>
<div class="c l-4" style="left:1655px;width:55px;">5</div>
</div>
<div class="row" style="top:341px;height:16px;">
<div class="c l-2" style="left:0px;width:65px;">21649863</div>
<div class="c l-4" style="left:65px;width:125px;">MS C Theron</div>
<div class="c l0" style="left:190px;width:85px;">23-Aug-2016</div>
<div class="c l0" style="left:275px;width:85px;">23-Aug-2016</div>
<div class="c l-1" style="left:360px;width:65px;">902176</div>
<div class="c l-1" style="left:425px;width:65px;">1310</div>
<div class="c l-9" style="left:490px;width:55px;">SD30</div>
<div class="c" style="left:545px;width:60px;"></div>
<div class="c l-8" style="left:605px;width:55px;">XYZ0</div>
<div class="c l-1" style="left:660px;width:55px;">400545</div>
<div class="c l-8" style="left:715px;width:55px;">XYZ0</div>
<div class="c l-1" style="left:770px;width:55px;">401515</div>
<div class="c r l0" style="left:825px;width:85px;">12500.00</div>
<div class="c l-4" style="left:910px;width:55px;">C</div>
<div class="c l-13" style="left:965px;width:55px;">SAR</div>
<div class="c l-5" style="left:1020px;width:125px;">TUITION FEES PAID</div>
<div class="c l-3" style="left:1145px;width:125px;">MS C Theron 21649863</div>
<div class="c" style="left:1270px;width:55px;"></div>
<div class="c" style="left:1325px;width:55px;"></div>
<div class="c" style="left:1380px;width:55px;"></div>
<div class="c" style="left:1435px;width:55px;"></div>
<div class="c" style="left:1490px;width:55px;"></div>
<div class="c" style="left:1545px;width:55px;"></div>
<div class="c l-1" style="left:1600px;width:55px;">2016</div>
<div class="c l-4" style="left:1655px;width:55px;">5</div>
</div>
<div class="row" style="top:357px;height:16px;">
<div class="c l-2" style="left:0px;width:65px;">21649863</div>
<div class="c l-4" style="left:65px;width:125px;">MS C Theron</div>
<div class="c l0" style="left:190px;width:85px;">23-Aug-2016</div>
<div class="c l0" style="left:275px;width:85px;">23-Aug-2016</div>
<div class="c l-1" style="left:360px;width:65px;">902174</div>
<div class="c l-1" style="left:425px;width:65px;">1310</div>
<div class="c l-9" style="left:490px;width:55px;">SD30</div>
<div class="c" style="left:545px;width:60px;"></div>
<div class="c l-8" style="left:605px;width:55px;">XYZ0</div>
<div class="c l-1" style="left:660px;width:55px;">400545</div>
<div class="c l-8" style="left:715px;width:55px;">XYZ0</div>
<div class="c l-1" style="left:770px;width:55px;">401515</div>
<div class="c r l0" style="left:825px;width:85px;">18000.00</div>
<div class="c l-4" style="left:910px;width:55px;">C</div>
<div class="c l-13" style="left:965px;width:55px;">SAR</div>
<div class="c l-5" style="left:1020px;width:125px;">TUITION FEES PAID</div>
<div class="c l-3" style="left:1145px;width:125px;">MS C Theron 21649863</div>
<div class="c" style="left:1270px;width:55px;"></div>
<div class="c" style="left:1325px;width:55px;"></div>
<div class="c" style="left:1380px;width:55px;"></div>
<div class="c" style="left:1435px;width:55px;"></div>
<div class="c" style="left:1490px;width:55px;"></div>
<div class="c" style="left:1545px;width:55px;"></div>
<div class="c l-1" style="left:1600px;width:55px;">2016</div>
<div class="c l-4" style="left:1655px;width:55px;">5</div>
</div>
<div class="row" style="top:373px;height:16px;">
<div class="c l-2" style="left:0px;width:65px;">21649863</div>
<div class="c l-4" style="left:65px;width:125px;">MS C Theron</div>
<div class="c l0" style="left:190px;width:85px;">23-Aug-2016</div>
<div class="c l0" style="left:275px;width:85px;">23-Aug-2016</div>
<div class="c l-1" style="left:360px;width:65px;">902172</div>
<div class="c l-1" style="left:425px;width:65px;">1310</div>
<div class="c l-9" style="left:490px;width:55px;">SD30</div>
<div class="c" style="left:545px;width:60px;"></div>
<div class="c l-8" style="left:605px;width:55px;">XYZ0</div>
<div class="c l-1" style="left:660px;width:55px;">400545</div>
<div class="c l-8" style="left:715px;width:55px;">XYZ0</div>
<div class="c l-1" style="left:770px;width:55px;">401515</div>
<div class="c r l0" style="left:825px;width:85px;">7500.00</div>
<div class="c l-4" style="left:910px;width:55px;">C</div>
<div class="c l-13" style="left:965px;width:55px;">SAR</div>
<div class="c l-5" style="left:1020px;width:125px;">TUITION FEES PAID</div>
<div class="c l-3" style="left:1145px;width:125px;">MS C Theron 21649863</div>
<div class="c" style="left:1270px;width:55px;"></div>
<div class="c" style="left:1325px;width:55px;"></div>
<div class="c" style="left:1380px;width:55px;"></div>
<div class="c" style="left:1435px;width:55px;"></div>
<div class="c" style="left:1490px;width:55px;"></div>
<div class="c" style="left:1545px;width:55px;"></div>
<div class="c l-1" style="left:1600px;width:55px;">2016</div>
<div class="c l-4" style="left:1655px;width:55px;">5</div>
</div>
<div class="row" style="top:389px;height:17px;">
<div class="c l-2" style="left:0px;width:65px;">21649863</div>
<div class="c l-4" style="left:65px;width:125px;">MS C Theron</div>
<div class="c l0" style="left:190px;width:85px;">18-Aug-2016</div>
<div class="c l0" style="left:275px;width:85px;">18-Aug-2016</div>
<div class="c l-4" style="left:360px;width:65px;">BUS101 211</div>
<div class="c l-1" style="left:425px;width:65px;">2350</div>
<div class="c l-6" style="left:490px;width:55px;">FA</div>
<div class="c l-8" style="left:545px;width:60px;">1S16</div>
<div class="c l-8" style="left:605px;width:55px;">XYZ0</div>
<div class="c l-1" style="left:660px;width:55px;">401490</div>
<div class="c l-18" style="left:715px;width:55px;">GABC</div>
<div class="c l-1" style="left:770px;width:55px;">100010</div>
<div class="c r l0" style="left:825px;width:85px;">5450.00</div>
<div class="c l-4" style="left:910px;width:55px;">D</div>
<div class="c l-13" style="left:965px;width:55px;">SAR</div>
<div class="c l-3" style="left:1020px;width:125px;">E/N Business Economi...</div>
<div class="c" style="left:1145px;width:125px;"></div>
<div class="c" style="left:1270px;width:55px;"></div>
<div class="c" style="left:1325px;width:55px;"></div>
<div class="c" style="left:1380px;width:55px;"></div>
<div class="c" style="left:1435px;width:55px;"></div>
<div class="c" style="left:1490px;width:55px;"></div>
<div class="c" style="left:1545px;width:55px;"></div>
<div class="c l-1" style="left:1600px;width:55px;">2016</div>
<div class="c l-4" style="left:1655px;width:55px;">5</div>
</div>
<div class="row" style="top:406px;height:16px;">
<div class="c l-2" style="left:0px;width:65px;">21649863</div>
<div class="c l-4" style="left:65px;width:125px;">MS C Theron</div>
<div class="c l0" style="left:190px;width:85px;">18-Aug-2016</div>
<div class="c l0" style="left:275px;width:85px;">18-Aug-2016</div>
<div class="c l-1" style="left:360px;width:65px;">STA101 211</div>
<div class="c l-1" style="left:425px;width:65px;">2350</div>
<div class="c l-6" style="left:490px;width:55px;">FA</div>
<div class="c l-8" style="left:545px;width:60px;">1S16</div>
<div class="c l-8" style="left:605px;width:55px;">XYZ0</div>
<div class="c l-1" style="left:660px;width:55px;">401490</div>
<div class="c l-18" style="left:715px;width:55px;">GABC</div>
<div class="c l-1" style="left:770px;width:55px;">100010</div>
<div class="c r l0" style="left:825px;width:85px;">4540.00</div>
<div class="c l-4" style="left:910px;width:55px;">D</div>
<div class="c l-13" style="left:965px;width:55px;">SAR</div>
<div class="c l-1" style="left:1020px;width:125px;">E/N Statistics 101</div>
<div class="c" style="left:1145px;width:125px;"></div>
<div class="c" style="left:1270px;width:55px;"></div>
<div class="c" style="left:1325px;width:55px;"></div>
<div class="c" style="left:1380px;width:55px;"></div>
<div class="c" style="left:1435px;width:55px;"></div>
<div class="c" style="left:1490px;width:55px;"></div>
<div class="c" style="left:1545px;width:55px;"></div>
<div class="c l-1" style="left:1600px;width:55px;">2016</div>
<div class="c l-4" style="left:1655px;width:55px;">5</div>
</div>
<div class="row" style="top:422px;height:16px;">
<div class="c l-2" style="left:0px;width:65px;">21649863</div>
<div class="c l-4" style="left:65px;width:125px;">MS C Theron</div>
<div class="c l0" style="left:190px;width:85px;">18-Aug-2016</div>
<div class="c l0" style="left:275px;width:85px;">18-Aug-2016</div>
<div class="c l-5" style="left:360px;width:65px;">MAR101 211</div>
<div class="c l-1" style="left:425px;width:65px;">2350</div>
<div class="c l-6" style="left:490px;width:55px;">FA</div>
<div class="c l-8" style="left:545px;width:60px;">1S16</div>
<div class="c l-8" style="left:605px;width:55px;">XYZ0</div>
<div class="c l-1" style="left:660px;width:55px;">401490</div>
<div class="c l-18" style="left:715px;width:55px;">GABC</div>
<div class="c l-1" style="left:770px;width:55px;">100010</div>
<div class="c r l0" style="left:825px;width:85px;">5980.00</div>
<div class="c l-4" style="left:910px;width:55px;">D</div>
<div class="c l-13" style="left:965px;width:55px;">SAR</div>
<div class="c l-7" style="left:1020px;width:125px;">E/N MARKETING 101</div>
<div class="c" style="left:1145px;width:125px;"></div>
<div class="c" style="left:1270px;width:55px;"></div>
<div class="c" style="left:1325px;width:55px;"></div>
<div class="c" style="left:1380px;width:55px;"></div>
<div class="c" style="left:1435px;width:55px;"></div>
<div class="c" style="left:1490px;width:55px;"></div>
<div class="c" style="left:1545px;width:55px;"></div>
<div class="c l-1" style="left:1600px;width:55px;">2016</div>
<div class="c l-4" style="left:1655px;width:55px;">5</div>
</div>
<div class="row" style="top:438px;height:17px;">
<div class="c l-2" style="left:0px;width:65px;">21649863</div>
<div class="c l-4" style="left:65px;width:125px;">MS C Theron</div>
<div class="c l0" style="left:190px;width:85px;">18-Aug-2016</div>
<div class="c l0" style="left:275px;width:85px;">18-Aug-2016</div>
<div class="c l6" style="left:360px;width:65px;">03 I 11 1</div>
<div class="c l-1" style="left:425px;width:65px;">2450</div>
<div class="c l-9" style="left:490px;width:55px;">GA08</div>
<div class="c l-8" style="left:545px;width:60px;">TU16</div>
<div class="c l-9" style="left:605px;width:55px;">GA08</div>
<div class="c l-1" style="left:660px;width:55px;">401490</div>
<div class="c l-18" style="left:715px;width:55px;">GABC</div>
<div class="c l-1" style="left:770px;width:55px;">100030</div>
<div class="c r l0" style="left:825px;width:85px;">1650.00</div>
<div class="c l-4" style="left:910px;width:55px;">D</div>
<div class="c l-13" style="left:965px;width:55px;">SAR</div>
<div class="c l-7" style="left:1020px;width:125px;">SERVICE.ADMIN LEVIE...</div>
<div class="c" style="left:1145px;width:125px;"></div>
<div class="c" style="left:1270px;width:55px;"></div>
<div class="c" style="left:1325px;width:55px;"></div>
<div class="c" style="left:1380px;width:55px;"></div>
<div class="c" style="left:1435px;width:55px;"></div>
<div class="c" style="left:1490px;width:55px;"></div>
<div class="c" style="left:1545px;width:55px;"></div>
<div class="c l-1" style="left:1600px;width:55px;">2016</div>
<div class="c l-4" style="left:1655px;width:55px;">5</div>
</div>
<div class="row" style="top:455px;height:16px;">
<div class="c l-2" style="left:0px;width:65px;">21649863</div>
<div class="c l-4" style="left:65px;width:125px;">MS C Theron</div>
<div class="c l0" style="left:190px;width:85px;">18-Aug-2016</div>
<div class="c l0" style="left:275px;width:85px;">18-Aug-2016</div>
<div class="c l-13" style="left:360px;width:65px;">NDMAR 1</div>
<div class="c l-1" style="left:425px;width:65px;">2350</div>
<div class="c l-6" style="left:490px;width:55px;">FA</div>
<div class="c l-8" style="left:545px;width:60px;">TU16</div>
<div class="c l-8" style="left:605px;width:55px;">XYZ0</div>
<div class="c l-1" style="left:660px;width:55px;">401490</div>
<div class="c l-18" style="left:715px;width:55px;">GABC</div>
<div class="c l-1" style="left:770px;width:55px;">100010</div>
<div class="c r l0" style="left:825px;width:85px;">9580.00</div>
<div class="c l-4" style="left:910px;width:55px;">D</div>
<div class="c l-13" style="left:965px;width:55px;">SAR</div>
<div class="c l-12" style="left:1020px;width:125px;">ND MARKETING RSA</div>
<div class="c" style="left:1145px;width:125px;"></div>
<div class="c" style="left:1270px;width:55px;"></div>
<div class="c" style="left:1325px;width:55px;"></div>
<div class="c" style="left:1380px;width:55px;"></div>
<div class="c" style="left:1435px;width:55px;"></div>
<div class="c" style="left:1490px;width:55px;"></div>
<div class="c" style="left:1545px;width:55px;"></div>
<div class="c l-1" style="left:1600px;width:55px;">2016</div>
<div class="c l-4" style="left:1655px;width:55px;">5</div>
</div>
</div>

<div class="a" style="left:7px;top:695px;width:1688px;height:17px;background:#f0f0f0;"></div>
<div class="a" style="left:41px;top:695px;width:1532px;height:17px;background:#c9c9c9;"></div>
<svg class="a" style="left:20px;top:696px" width="16" height="15" viewBox="0 0 16 15"><path d="M11.5 1.5 L5 7.5 L11.5 13.5" fill="none" stroke="#4a4a4a" stroke-width="2.8"/></svg>
<svg class="a" style="left:1665px;top:696px" width="16" height="15" viewBox="0 0 16 15"><path d="M4.5 1.5 L11 7.5 L4.5 13.5" fill="none" stroke="#4a4a4a" stroke-width="2.8"/></svg>

<!-- status bar -->
<div class="a" style="left:7px;top:713px;width:1690px;height:1px;background:#6e6e66;"></div>
<div class="a" style="left:9px;top:714px;width:1688px;height:24px;background:#ecebdc;"></div>
<div class="a" style="left:9px;top:738px;width:1688px;height:1px;background:#77776e;"></div>
<div class="t" style="left:15px;top:720px;color:#5e5e5e;letter-spacing:-0.15px">Columns Hidden</div>
<div class="t" style="left:115px;top:720px;">32</div>
<div class="a" style="left:141px;top:718px;width:1px;height:16px;background:#a9a89c;"></div>
<div class="a" style="left:1673px;top:714px;width:1px;height:24px;background:#8e8d82;"></div>
<div class="t" style="left:1679px;top:720px;">24</div>

<!-- bottom bands -->
<div class="a" style="left:2px;top:742px;width:1736px;height:5px;background:linear-gradient(#e4e2d6,#cfccbc);"></div>
<div class="a" style="left:2px;top:746px;width:1736px;height:1px;background:#8a887c;"></div>
<div class="a" style="left:2px;top:752px;width:1736px;height:1px;background:#7a7a7a;"></div>


</body></html>
